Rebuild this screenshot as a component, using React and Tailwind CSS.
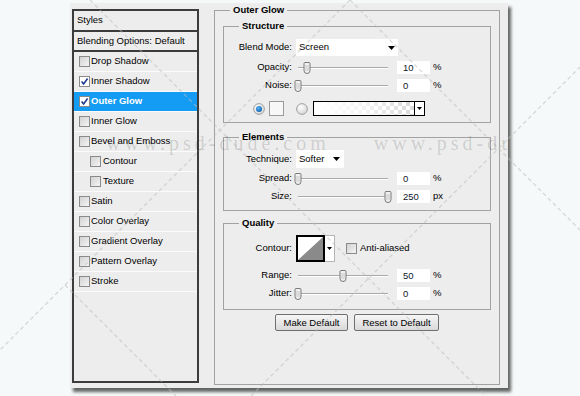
import React from 'react'

const styleRows = [
  { label: 'Drop Shadow' },
  { label: 'Inner Shadow', checked: true },
  { label: 'Outer Glow', checked: true, active: true },
  { label: 'Inner Glow' },
  { label: 'Bevel and Emboss' },
  { label: 'Contour', indent: true },
  { label: 'Texture', indent: true },
  { label: 'Satin' },
  { label: 'Color Overlay' },
  { label: 'Gradient Overlay' },
  { label: 'Pattern Overlay' },
  { label: 'Stroke' },
]

function Check({ checked }) {
  return (
    <span
      className={`w-[11px] h-[11px] border border-[#8a8a8a] shrink-0 flex items-center justify-center ${
        checked ? 'bg-white' : 'bg-gradient-to-br from-[#d2d2d2] to-[#f4f4f4]'
      }`}
    >
      {checked && (
        <svg width="9" height="9" viewBox="0 0 9 9">
          <path d="M1.6 4.4 L3.6 7 L7.6 1.6" stroke="#1f3a8f" strokeWidth="1.6" fill="none" />
        </svg>
      )}
    </span>
  )
}

function Thumb({ left }) {
  return (
    <svg className="absolute top-[1px]" style={{ left }} width="8" height="12" viewBox="0 0 8 12">
      <path
        d="M1 1.6 Q1 0.5 2 0.5 H6 Q7 0.5 7 1.6 V8.5 Q7 11.5 4 11.5 Q1 11.5 1 8.5 Z"
        fill="#f0f0f0"
        stroke="#7a7a7a"
      />
      <path d="M3 3 V9 M5 3 V9" stroke="#c6c6c6" />
    </svg>
  )
}

function Arrow() {
  return (
    <svg width="7" height="4" viewBox="0 0 7 4">
      <path d="M0 0 H7 L3.5 4 Z" fill="#000" />
    </svg>
  )
}

function SliderRow({ label, value, max, unit, className = '' }) {
  const pos = (value / max) * 90
  return (
    <div className={`flex items-center h-[13px] ${className}`}>
      <div className="w-[68px] text-right">{label}</div>
      <div className="relative w-[96px] h-[13px] ml-[4px]">
        <div className="absolute left-[2px] w-[90px] top-[6px] h-[2px] border-t border-t-[#a9a9a9] border-b border-b-white" />
        <Thumb left={2 + pos - 4} />
      </div>
      <div className="ml-[5px] w-[33px] h-[13px] bg-white pl-[6px] leading-[13px] text-[#101828]">{value}</div>
      <span className="ml-[3px]">{unit}</span>
    </div>
  )
}

function Radio({ on, id }) {
  return (
    <svg width="12" height="12" viewBox="0 0 12 12" className="shrink-0">
      <defs>
        <radialGradient id={id} cx="0.4" cy="0.35" r="0.7">
          <stop offset="0" stopColor="#ffffff" />
          <stop offset="1" stopColor="#d2d2d2" />
        </radialGradient>
        <radialGradient id={id + 'd'} cx="0.4" cy="0.35" r="0.7">
          <stop offset="0" stopColor="#5ab4f5" />
          <stop offset="1" stopColor="#0b5fae" />
        </radialGradient>
      </defs>
      <circle cx="6" cy="6" r="5.4" fill={`url(#${id})`} stroke="#a2a2a2" />
      {on && <circle cx="6" cy="6" r="3" fill={`url(#${id + 'd'})`} />}
    </svg>
  )
}

function Group({ title, className = '', children }) {
  return (
    <fieldset className={`border border-[#a2a2a2] ${className}`}>
      <legend className="ml-[15px] px-[3px] font-bold leading-[12px]">{title}</legend>
      {children}
    </fieldset>
  )
}

function App() {
  return (
    <div className="relative w-[580px] h-[396px] overflow-hidden bg-[#f6f9f9] pt-[3px] pl-[70px] font-['Liberation_Sans',Arial,sans-serif] text-[9.5px] text-black">
      <div className="w-[438px] h-[385px] bg-[#ededed] flex items-start shadow-[3px_4px_3px_rgba(0,0,0,0.6)]">
        {/* Styles list */}
        <div className="ml-[2px] mt-[6px] w-[127px] h-[374px] border-2 border-[#3c3c3c] flex flex-col">
          <div className="h-[21px] border-b-2 border-[#3c3c3c] flex items-center pl-[3px]">Styles</div>
          <div className="h-[20px] border-b-2 border-[#3c3c3c] flex items-center pl-[3px]">Blending Options: Default</div>
          {styleRows.map((r) => (
            <div
              key={r.label}
              className={`h-[20px] border-b border-[#fbfbfb] flex items-center ${
                r.indent ? 'pl-[16px] gap-[2px]' : 'pl-[5px] gap-[1px]'
              } ${r.active ? 'bg-[#149cf4] text-white font-bold' : ''}`}
            >
              <Check checked={r.checked} />
              <span>{r.label}</span>
            </div>
          ))}
        </div>

        {/* Outer Glow settings */}
        <fieldset className="ml-[15px] mt-[1px] w-[286px] h-[381px] border border-[#a2a2a2]">
          <legend className="ml-[15px] px-[3px] font-bold leading-[12px]">Outer Glow</legend>
          <div className="px-[8px]">
            <Group title="Structure" className="mt-[4px]">
              <div className="pt-[7px] pb-[6px]">
                <div className="flex items-center h-[17px]">
                  <div className="w-[68px] text-right">Blend Mode:</div>
                  <div className="ml-[4px] w-[102px] h-[17px] bg-white flex items-center justify-between pl-[3px] pr-[3px]">
                    <span>Screen</span>
                    <Arrow />
                  </div>
                </div>
                <SliderRow label="Opacity:" value={10} max={100} unit="%" className="mt-[5px]" />
                <SliderRow label="Noise:" value={0} max={100} unit="%" className="mt-[5px]" />
                <div className="mt-[9px] h-[15px] flex items-center pl-[29px]">
                  <Radio on id="r1" />
                  <div className="ml-[4px] w-[15px] h-[15px] bg-[#f7f7f7] border border-[#9a9a9a]" />
                  <div className="ml-[12px]">
                    <Radio id="r2" />
                  </div>
                  <div className="ml-[5px] w-[112px] h-[15px] border border-black flex">
                    <div className="flex-1 bg-[conic-gradient(#d9d9d9_25%,#ffffff_0_50%,#d9d9d9_0_75%,#ffffff_0)] bg-[length:8px_8px]">
                      <div className="w-full h-full bg-gradient-to-r from-white via-white/70 to-transparent" />
                    </div>
                    <div className="w-[10px] border-l border-black bg-white flex items-center justify-center">
                      <svg width="5" height="3" viewBox="0 0 5 3">
                        <path d="M0 0 H5 L2.5 3 Z" fill="#000" />
                      </svg>
                    </div>
                  </div>
                </div>
              </div>
            </Group>

            <Group title="Elements" className="mt-[8px]">
              <div className="pt-[7px] pb-[7px]">
                <div className="flex items-center h-[18px]">
                  <div className="w-[68px] text-right">Technique:</div>
                  <div className="ml-[4px] w-[48px] h-[18px] bg-white flex items-center justify-between pl-[3px] pr-[4px]">
                    <span>Softer</span>
                    <Arrow />
                  </div>
                </div>
                <SliderRow label="Spread:" value={0} max={100} unit="%" className="mt-[4px]" />
                <SliderRow label="Size:" value={250} max={250} unit="px" className="mt-[5px]" />
              </div>
            </Group>

            <Group title="Quality" className="mt-[6px]">
              <div className="pt-[6px] pb-[9px]">
                <div className="flex items-center h-[27px]">
                  <div className="w-[68px] text-right">Contour:</div>
                  <div className="ml-[4px] h-[27px] flex">
                    <div className="w-[29px] h-[27px] border-2 border-black bg-white">
                      <svg width="25" height="23" viewBox="0 0 25 23" className="block">
                        <path d="M0 23 L25 0 V23 Z" fill="#8a8a8a" />
                      </svg>
                    </div>
                    <div className="w-[10px] h-[27px] bg-white border border-l-0 border-[#b5b5b5] flex items-center justify-center">
                      <svg width="5" height="3" viewBox="0 0 5 3">
                        <path d="M0 0 H5 L2.5 3 Z" fill="#000" />
                      </svg>
                    </div>
                  </div>
                  <div className="ml-[11px] flex items-center gap-[3px]">
                    <Check />
                    <span>Anti-aliased</span>
                  </div>
                </div>
                <SliderRow label="Range:" value={50} max={100} unit="%" className="mt-[7px]" />
                <SliderRow label="Jitter:" value={0} max={100} unit="%" className="mt-[5px]" />
              </div>
            </Group>

            <div className="mt-[4px] flex justify-center gap-[6px]">
              <button className="w-[73px] h-[17px] border border-[#6f6f6f] rounded-[2px] bg-gradient-to-b from-[#f6f6f6] to-[#d9d9d9] leading-none">
                Make Default
              </button>
              <button className="w-[85px] h-[17px] border border-[#6f6f6f] rounded-[2px] bg-gradient-to-b from-[#f6f6f6] to-[#d9d9d9] leading-none">
                Reset to Default
              </button>
            </div>
          </div>
        </fieldset>
      </div>

      {/* watermark */}
      <div className="absolute inset-0 pointer-events-none">
        <svg width="580" height="396" className="absolute left-0 top-0">
          <g stroke="#bdbdbd" strokeWidth="1.3" strokeDasharray="4 3" opacity="0.55">
            <line x1="350" y1="0" x2="0" y2="350" />
            <line x1="350" y1="0" x2="580" y2="230" />
            <line x1="65" y1="285" x2="176" y2="396" />
            <line x1="251" y1="396" x2="580" y2="67" />
            <line x1="90" y1="0" x2="486" y2="396" />
          </g>
        </svg>
        <div className="absolute top-[133px] left-[70px] w-[438px] h-[22px] overflow-hidden font-['Liberation_Serif',serif] text-[20px] leading-[20px] tracking-[4px] text-black/15 whitespace-nowrap">
          <span className="ml-[36px]">www.psd-dude.com</span>
          <span className="ml-[44px]">www.psd-dude.com</span>
        </div>
      </div>
    </div>
  )
}

export default App
